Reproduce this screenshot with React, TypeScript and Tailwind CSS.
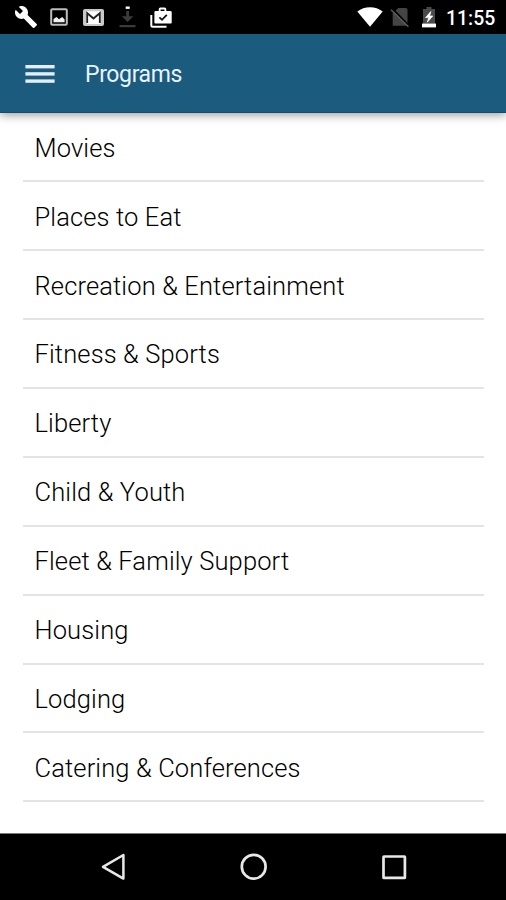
import React from "react";

const programs = [
  "Movies",
  "Places to Eat",
  "Recreation & Entertainment",
  "Fitness & Sports",
  "Liberty",
  "Child & Youth",
  "Fleet & Family Support",
  "Housing",
  "Lodging",
  "Catering & Conferences",
];

const StatusBar = () => (
  <div className="h-[34px] bg-black flex items-center justify-between pl-[14px] pr-[11px]">
    <div className="flex items-center h-full">
      {/* Wrench */}
      <svg className="w-6 h-6" viewBox="0 0 24 24" fill="#fff">
        <path d="M22.7 19l-9.1-9.1c.9-2.3.4-5-1.5-6.9-2-2-5-2.4-7.4-1.3L9 6 6 9 1.6 4.7C.4 7.1.9 10.1 2.9 12.1c1.9 1.9 4.6 2.4 6.9 1.5l9.1 9.1c.4.4 1 .4 1.4 0l2.3-2.3c.5-.4.5-1.1.1-1.4z" />
      </svg>
      {/* Screenshot */}
      <svg className="w-[18px] h-[18px] ml-3" viewBox="0 0 18 18">
        <rect x="1.2" y="1.2" width="15.6" height="15.6" rx="1" fill="none" stroke="#bdbdbd" strokeWidth="2" />
        <path d="M3.5 14.2V11l3-2 2.5 2.2L12.2 9l2.4 2.6v2.6z" fill="#f0f0f0" />
      </svg>
      {/* Mail */}
      <svg className="w-[21px] h-[17px] ml-[15px]" viewBox="0 0 21 17">
        <rect width="21" height="17" rx="2" fill="#c9c9c9" />
        <path d="M3.5 2.2h14L10.5 8z" fill="#fff" />
        <path d="M3.6 15V4l6.9 6 6.9-6v11z" fill="#fff" />
        <path d="M4.2 14V4.2l6.3 5.3 6.3-5.3V14" fill="none" stroke="#222" strokeWidth="1.8" />
      </svg>
      {/* Download */}
      <svg className="w-[17px] h-[22px] ml-[15px]" viewBox="0 0 17 22">
        <path d="M6.7 0.5h4v2.4h-4z" fill="#fff" />
        <path d="M7.2 5h2.8v5.2h4.4L8.6 16 2.6 10.2h4.6zM.5 19h16v2.2H.5z" fill="#3b3b3b" />
      </svg>
      {/* Shop */}
      <svg className="w-[22px] h-[21px] ml-[14px]" viewBox="0 0 22 21">
        <path d="M1.3 8v10.2q0 1.5 1.5 1.5h13.7" fill="none" stroke="#fff" strokeWidth="2" />
        <path d="M8.7 4V2.2Q8.7.5 10.4.5h4.2q1.7 0 1.7 1.7V4h4.2q1.2 0 1.2 1.2v10.2q0 1.2-1.2 1.2H5.6q-1.2 0-1.2-1.2V5.2Q4.4 4 5.6 4zm1.9 0h3.8V2.4h-3.8z" fill="#fff" />
        <path d="M9.4 10.3l2.6 2.5 4.8-5" fill="none" stroke="#111" strokeWidth="1.8" />
      </svg>
    </div>
    <div className="flex items-center h-full">
      {/* Wifi */}
      <svg className="w-[26px] h-5" viewBox="0 0 26 20">
        <path d="M.3 4.6Q5.8.2 13 .2t12.7 4.4L13 19.8z" fill="#fff" />
      </svg>
      {/* No sim */}
      <svg className="w-5 h-[21px] ml-[7px]" viewBox="0 0 20 21">
        <path d="M8.2 1h7.5q1.8 0 1.8 1.8v16H2.7V6.5z" fill="#444" />
        <path d="M2.4 1.6l17 17.5" stroke="#000" strokeWidth="1.8" />
        <path d="M1 2.8l17.4 17" stroke="#5a5a5a" strokeWidth="1.6" />
      </svg>
      {/* Battery */}
      <svg className="w-[14px] h-[21px] ml-[12px]" viewBox="0 0 14 21">
        <path d="M4.5 0h5v2H13v15H1V2h3.5z" fill="#4a4a4a" />
        <path d="M0 16.6h14v3.8H0z" fill="#fff" />
        <path d="M8.8 4.6l-5.2 6h3.2l-1.5 4.6 5.4-6.2H7.6z" fill="#fff" stroke="#fff" strokeWidth="0.8" />
      </svg>
      <span className="ml-[10px] w-[49px] text-[19.4px] leading-[34px] pt-[3px] font-medium text-white whitespace-nowrap">
        11:55
      </span>
    </div>
  </div>
);

const Header = () => (
  <header className="relative h-[79px] bg-[#1b5b7e] border-b border-[#124d6d] shadow-[0_2px_9px_rgba(0,0,0,0.4)] flex items-center pl-[25px]">
    {/* Menu */}
    <svg className="w-[30px] h-[21px]" viewBox="0 0 30 21" fill="#e4edf4">
      <rect x="0.4" y="2" width="29.2" height="3.4" />
      <rect x="0.4" y="9.2" width="29.2" height="3.4" />
      <rect x="0.4" y="16.4" width="29.2" height="3.4" />
    </svg>
    <h1 className="ml-[30px] pt-[4px] text-[23px] tracking-[-0.37px] leading-[28px] text-[#e9f3fb]">Programs</h1>
  </header>
);

const NavBar = () => (
  <nav className="h-[67px] bg-black border-t border-[#777] flex items-center pl-[100px] pb-px">
    <svg className="w-[26px] h-7" viewBox="0 0 26 28">
      <path d="M23.4 2v23.6L3 13.8z" fill="none" stroke="#e8e8e8" strokeWidth="2.5" strokeLinejoin="round" />
    </svg>
    <svg className="w-7 h-7 ml-[113.5px]" viewBox="0 0 28 28">
      <circle cx="13.7" cy="13.7" r="11.9" fill="none" stroke="#e8e8e8" strokeWidth="2.7" />
    </svg>
    <svg className="w-[26px] h-[26px] ml-[113.5px]" viewBox="0 0 26 26">
      <rect x="2.5" y="2.5" width="21.4" height="21.4" rx="0.5" fill="none" stroke="#e8e8e8" strokeWidth="2.7" strokeLinejoin="round" />
    </svg>
  </nav>
);

export default function App() {
  return (
    <div className="w-[506px] h-[900px] bg-white flex flex-col overflow-hidden font-['Roboto',sans-serif]">
      <StatusBar />
      <Header />
      <main className="flex-1 pl-[23px] pr-[22px]">
        <ul>
          {programs.map((name) => (
            <li
              key={name}
              className="h-[68.95px] border-b-2 border-[#e4e4e4] pl-[11.5px] pt-[2.6px] flex items-center text-[25.5px] tracking-[0.13px] font-light text-black"
            >
              {name}
            </li>
          ))}
        </ul>
      </main>
      <NavBar />
    </div>
  );
}
